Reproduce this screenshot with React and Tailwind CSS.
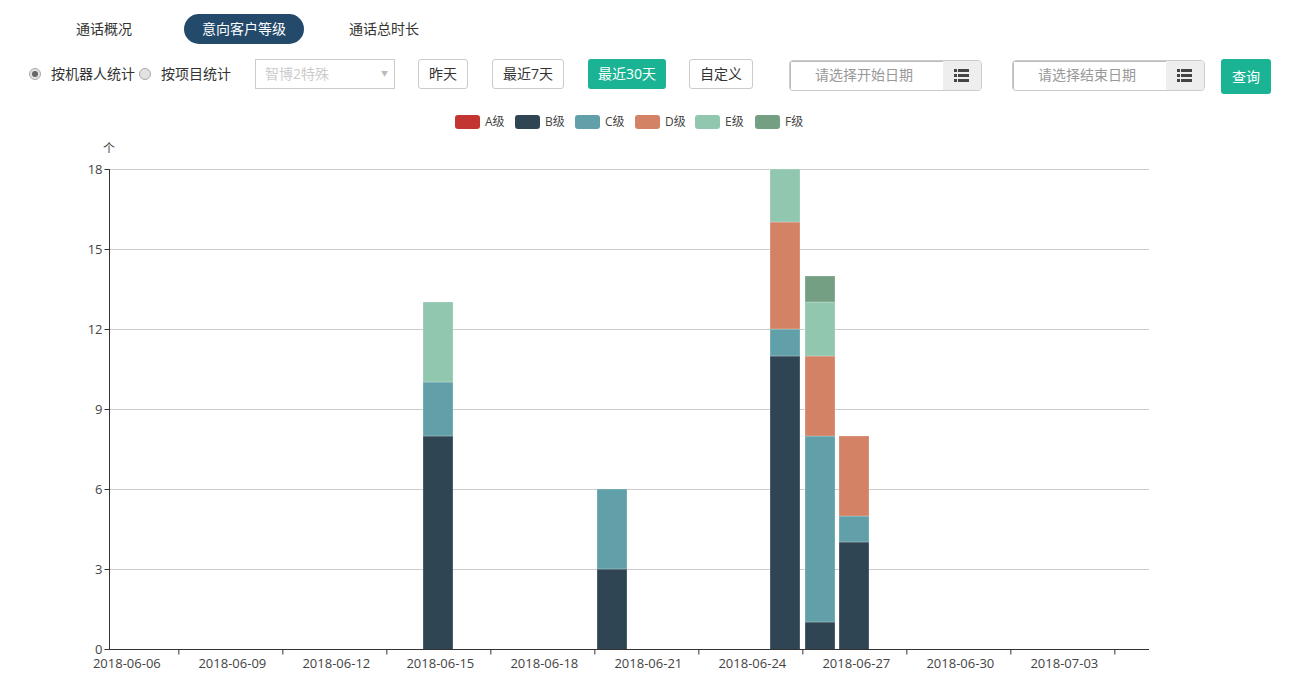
import React from 'react';

const FONT = "font-['Open_Sans','Noto_Sans_CJK_SC',sans-serif]";

const colors = { A: '#c23531', B: '#2f4554', C: '#61a0a8', D: '#d48265', E: '#91c7ae', F: '#749f83' };

const bars = [
  { index: 9, values: { B: 8, C: 2, E: 3 } },
  { index: 14, values: { B: 3, C: 3 } },
  { index: 19, values: { B: 11, C: 1, D: 4, E: 2 } },
  { index: 20, values: { B: 1, C: 7, D: 3, E: 2, F: 1 } },
  { index: 21, values: { B: 4, C: 1, D: 3 } },
];

const dateLabels = ['06-06', '06-09', '06-12', '06-15', '06-18', '06-21', '06-24', '06-27', '06-30', '07-03'];

const LEFT = 109.5;
const BOTTOM = 649.5;
const UNIT = 480 / 18;
const STEP = 1040 / 30;

const Chart = () => {
  return (
    <svg width="1308" height="562" viewBox="0 129 1308 562" className="block">
      <text x="109" y="153" textAnchor="middle" fontSize="12" fill="#444">个</text>
      {[0, 3, 6, 9, 12, 15, 18].map((v) => {
        const y = BOTTOM - v * UNIT;
        return (
          <g key={v}>
            {v > 0 && <line x1={LEFT} x2="1149" y1={y} y2={y} stroke="#ccc" />}
            <line x1={LEFT - 5} x2={LEFT} y1={y} y2={y} stroke="#333" />
            <text x={LEFT - 7} y={y + 4.5} textAnchor="end" fontSize="13" fill="#444">{v}</text>
          </g>
        );
      })}
      {bars.map((bar) => {
        const x = Math.floor(LEFT + (bar.index + 0.5) * STEP - 15);
        let total = 0;
        let bottom = BOTTOM;
        return Object.entries(bar.values).map(([key, value]) => {
          total += value;
          const top = Math.floor(BOTTOM - total * UNIT);
          const rect = (
            <rect
              key={bar.index + key}
              x={x}
              y={top}
              width="30"
              height={bottom - top}
              fill={colors[key]}
              stroke="#fff"
              strokeOpacity="0.25"
              strokeWidth="1"
            />
          );
          bottom = top;
          return rect;
        });
      })}
      <line x1={LEFT} x2={LEFT} y1="169" y2="650" stroke="#333" />
      <line x1={LEFT} x2="1149" y1={BOTTOM} y2={BOTTOM} stroke="#333" />
      {dateLabels.map((label, i) => (
        <g key={label}>
          <line x1={LEFT + (i * 3 + 2) * STEP} x2={LEFT + (i * 3 + 2) * STEP} y1={BOTTOM} y2={BOTTOM + 5} stroke="#333" />
          <text x={LEFT + (i * 3 + 0.5) * STEP + (i > 0 ? 1.5 : 0)} y="668" textAnchor="middle" fontSize="13" fill="#444">2018-{label}</text>
        </g>
      ))}
    </svg>
  );
};

const Radio = ({ checked }) => (
  <span className="w-3 h-3 rounded-full border border-[#aaa] bg-[#e2e2e2] flex items-center justify-center shrink-0">
    {checked && <span className="w-[6px] h-[6px] rounded-full bg-[#666]" />}
  </span>
);

const RangeButton = ({ label, className }) => (
  <button className={`h-[30px] border border-[#ccc] rounded-[3px] text-sm text-[#333] bg-white ${className}`}>{label}</button>
);

const DateInput = ({ placeholder, className }) => (
  <div className={`w-[193px] h-[31px] mt-px flex border border-[#ccc] rounded-[4px] overflow-hidden ${className}`}>
    <div className="flex-1 pr-[6px] text-center text-sm leading-[26px] text-[#999] border-t border-l border-[#bbb]">{placeholder}</div>
    <div className="w-[38px] pr-[2px] bg-[#eee] flex items-center justify-center">
      <svg width="15" height="13" viewBox="0 0 15 13" fill="#444">
        <rect x="0" y="0" width="3" height="3" />
        <rect x="4" y="0" width="11" height="3" />
        <rect x="0" y="5" width="3" height="3" />
        <rect x="4" y="5" width="11" height="3" />
        <rect x="0" y="10" width="3" height="3" />
        <rect x="4" y="10" width="11" height="3" />
      </svg>
    </div>
  </div>
);

export default function App() {
  return (
    <div className={`w-[1308px] h-[691px] overflow-hidden bg-white text-[#333] ${FONT}`}>
      {/* Tabs */}
      <div className="flex items-center pt-[14px] pl-[76px] text-sm h-[44px]">
        <span className="w-[108px]">通话概况</span>
        <span className="w-[120px] h-[30px] rounded-full bg-[#23496b] text-white flex items-center justify-center">意向客户等级</span>
        <span className="ml-[45px]">通话总时长</span>
      </div>

      {/* Filters */}
      <div className="flex items-start mt-[15px] pl-[29px] h-[35px] text-sm">
        <div className="flex items-center h-[30px]">
          <Radio checked />
          <span className="ml-[10px] w-[88px]">按机器人统计</span>
          <Radio />
          <span className="ml-[10px] w-[70px]">按项目统计</span>
        </div>
        <div className="ml-[24px] w-[140px] h-[30px] border border-[#ccc] flex items-center justify-between pl-[9px] pr-[6px] text-[#ccc]">
          <span>智博2特殊</span>
          <span className="text-[7px] text-[#bbb]">▼</span>
        </div>
        <RangeButton label="昨天" className="ml-[23px] w-[50px]" />
        <RangeButton label="最近7天" className="ml-[24px] w-[72px]" />
        <button className="ml-[24px] w-[78px] h-[30px] rounded-[3px] bg-[#1ab394] text-white text-sm">最近30天</button>
        <RangeButton label="自定义" className="ml-[23px] w-[64px]" />
        <DateInput placeholder="请选择开始日期" className="ml-[36px]" />
        <DateInput placeholder="请选择结束日期" className="ml-[30px]" />
        <button className="ml-[16px] w-[50px] h-[35px] rounded-[3px] bg-[#1ab394] text-white text-sm">查询</button>
      </div>

      {/* Legend */}
      <div className="flex items-center mt-[21px] h-[14px] pl-[455px] text-xs text-[#444]">
        {Object.entries(colors).map(([key, color]) => (
          <div key={key} className="w-[60px] flex items-center gap-[5px]">
            <span className="w-[25px] h-[14px] rounded-[3px] inline-block" style={{ backgroundColor: color }} />
            <span>{key}级</span>
          </div>
        ))}
      </div>

      <Chart />
    </div>
  );
}
